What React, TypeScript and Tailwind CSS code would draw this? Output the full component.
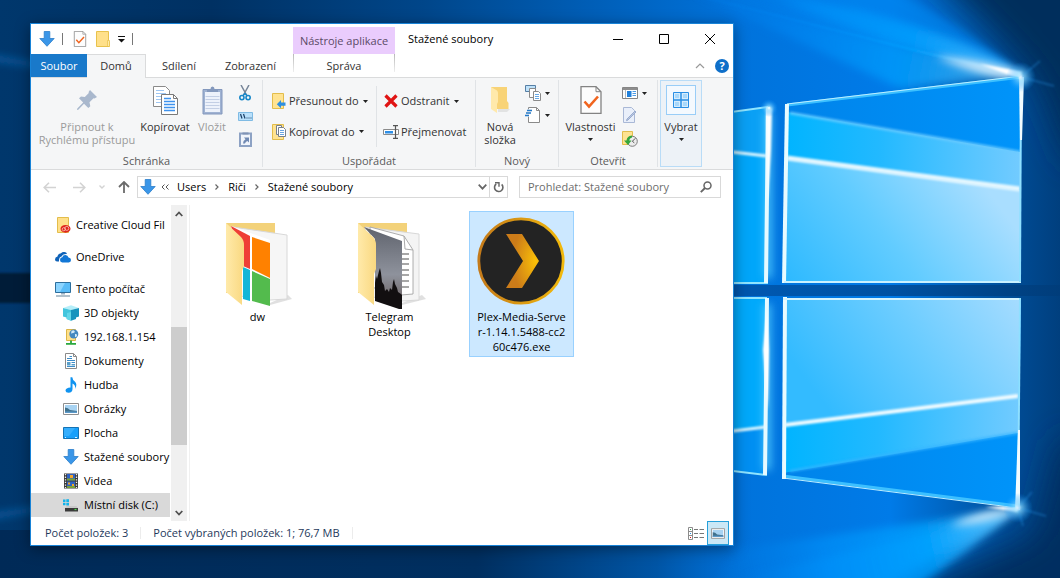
import React, { JSX, ReactNode } from 'react';
import clsx from 'clsx';

interface IconProps {
  className?: string;
}

interface TreeItem {
  label: string;
  icon: JSX.Element;
  root?: boolean;
  selected?: boolean;
}

interface FileItem {
  lines: string[];
  icon: JSX.Element;
  selected?: boolean;
}

const Wallpaper = (): JSX.Element => (
  <svg
    className="absolute inset-0 h-full w-full"
    viewBox="0 0 1060 578"
    preserveAspectRatio="xMidYMid slice"
    aria-hidden="true"
  >
    <defs>
      <linearGradient id="sky" x1="0" x2="1">
        <stop offset="0" stopColor="#00376c" />
        <stop offset="0.2" stopColor="#003163" />
        <stop offset="0.4" stopColor="#00468a" />
        <stop offset="0.55" stopColor="#005db5" />
        <stop offset="0.7" stopColor="#0073dc" />
        <stop offset="0.84" stopColor="#007be8" />
        <stop offset="0.95" stopColor="#004e99" />
        <stop offset="1" stopColor="#003f7e" />
      </linearGradient>
      <linearGradient id="floor" x1="0" x2="1">
        <stop offset="0" stopColor="#002a57" />
        <stop offset="0.45" stopColor="#002f60" />
        <stop offset="0.62" stopColor="#00498f" stopOpacity="0.6" />
        <stop offset="0.72" stopColor="#0068cc" stopOpacity="0" />
      </linearGradient>
      <linearGradient id="beamTop" gradientUnits="userSpaceOnUse" x1="640" y1="0" x2="1020" y2="75">
        <stop offset="0" stopColor="#0078e2" stopOpacity="0" />
        <stop offset="0.4" stopColor="#0088f4" stopOpacity="0.8" />
        <stop offset="0.7" stopColor="#00a2ff" />
        <stop offset="1" stopColor="#6fcbff" />
      </linearGradient>
      <linearGradient id="beamBottom" gradientUnits="userSpaceOnUse" x1="700" y1="578" x2="1018" y2="508">
        <stop offset="0" stopColor="#0078e2" stopOpacity="0" />
        <stop offset="0.4" stopColor="#0092fa" stopOpacity="0.8" />
        <stop offset="0.7" stopColor="#00a2ff" />
        <stop offset="1" stopColor="#6fcbff" />
      </linearGradient>
      <linearGradient id="paneTop" x1="0" y1="1" x2="1" y2="0.6">
        <stop offset="0" stopColor="#2cb9ff" />
        <stop offset="0.5" stopColor="#62ccff" />
        <stop offset="1" stopColor="#a9deff" />
      </linearGradient>
      <linearGradient id="paneBottom" x1="0" y1="0.4" x2="1" y2="0">
        <stop offset="0" stopColor="#33bbff" />
        <stop offset="0.5" stopColor="#6accff" />
        <stop offset="1" stopColor="#a6dcff" />
      </linearGradient>
      <linearGradient id="band" x1="0" x2="1">
        <stop offset="0" stopColor="#00b4ff" />
        <stop offset="0.4" stopColor="#22b9ff" />
        <stop offset="1" stopColor="#72cbff" />
      </linearGradient>
      <linearGradient id="deep" x1="0" x2="1">
        <stop offset="0" stopColor="#0083ea" />
        <stop offset="1" stopColor="#0094fa" />
      </linearGradient>
      <linearGradient id="sill" x1="0" x2="1">
        <stop offset="0" stopColor="#0050a2" />
        <stop offset="1" stopColor="#003c79" />
      </linearGradient>
      <radialGradient id="flare">
        <stop offset="0" stopColor="#ffffff" />
        <stop offset="0.25" stopColor="#8fdcff" stopOpacity="0.7" />
        <stop offset="1" stopColor="#0091ff" stopOpacity="0" />
      </radialGradient>
      <filter id="blur1" filterUnits="userSpaceOnUse" x="-100" y="-100" width="1300" height="800">
        <feGaussianBlur stdDeviation="1" />
      </filter>
      <filter id="blur4" filterUnits="userSpaceOnUse" x="-100" y="-100" width="1300" height="800">
        <feGaussianBlur stdDeviation="4" />
      </filter>
      <filter id="blur14" filterUnits="userSpaceOnUse" x="-100" y="-100" width="1300" height="800">
        <feGaussianBlur stdDeviation="16" />
      </filter>
    </defs>
    <rect width="1060" height="578" fill="url(#sky)" />
    <rect y="530" width="1060" height="48" fill="url(#floor)" />
    <path d="M-20 273H60v30H-20z" fill="#001a38" filter="url(#blur1)" />
    <path d="M-20 54L50 66v2L-20 58z" fill="#1673c4" filter="url(#blur4)" />
    <path d="M-20 520L50 508v-2L-20 516z" fill="#1673c4" filter="url(#blur4)" />
    {/* dark corners on the right */}
    <path d="M925-60H1130V160H1070L1040 84Q1000 30 925-30z" fill="#002d5b" filter="url(#blur14)" />
    <path d="M1130 640H880L930 578L1035 535L1060 440H1130z" fill="#002f60" filter="url(#blur14)" />
    {/* light beams that leave both outer corners */}
    <path d="M700-30H850Q960 20 1022 75L930 54z" fill="#0086f0" opacity="0.7" filter="url(#blur4)" />
    <path d="M780 0L860 10Q960 34 1022 75L930 54z" fill="#0096fb" opacity="0.6" filter="url(#blur4)" />
    <path d="M640-12L760-6Q960 28 1022 75L930 54L700-6z" fill="url(#beamTop)" opacity="0.6" filter="url(#blur4)" />
    <path d="M690-8L930 54L1020 75L900 88Z" fill="url(#beamTop)" opacity="0.7" filter="url(#blur4)" />
    <path d="M675-10L930 54L1020 74" stroke="url(#beamTop)" strokeWidth="2" fill="none" opacity="0.8" filter="url(#blur1)" />
    <path d="M935 56Q990 62 1022 73L1008 78Q965 70 935 56z" fill="#e6f6ff" filter="url(#blur4)" />
    <path d="M980 64L1022 72L1020 79z" fill="#fff" filter="url(#blur1)" />
    <path d="M700 600L740 548L1018 509Q960 560 880 610z" fill="url(#beamBottom)" opacity="0.8" filter="url(#blur4)" />
    <path d="M740 578L950 528L1018 511L880 588z" fill="url(#beamBottom)" opacity="0.8" filter="url(#blur4)" />
    <path d="M950 526Q980 510 1018 509Q990 522 950 526z" fill="#e6f6ff" filter="url(#blur4)" />
    <path d="M985 507L1020 506L1018 512z" fill="#fff" filter="url(#blur1)" />

    {/* left panes, mostly behind the window */}
    <path d="M600 130L768 107V283H600z" fill="#00a6fa" />
    <path d="M600 130L768 107V156L600 137z" fill="#0aa0f5" />
    <path d="M600 298H767V475L600 455z" fill="#00a9fb" />
    <path d="M600 447L767 427V475L600 455z" fill="#008ff2" />
    <path d="M768 112V278M767 304V470" stroke="#4fcaff" strokeWidth="7" filter="url(#blur4)" />
    <path d="M600 130L768 107M600 283H768M600 298H767M600 455L767 475" stroke="#8fe4ff" strokeWidth="2" fill="none" />
    <path d="M600 137L767 156M600 447L766 427" stroke="#dff7ff" strokeWidth="3" fill="none" filter="url(#blur1)" />
    <path d="M768 107L766 283M767 298L765 475" stroke="#e6faff" strokeWidth="4" fill="none" />
    <path d="M766 108L772 108L771 150L768 200zM767 310L769 350L768 410L763 350z" fill="#fff" filter="url(#blur1)" />

    {/* upper right pane */}
    <path d="M787 105L1022 77L1020 282L784 282z" fill="url(#deep)" />
    <path d="M787 112L1020 152V282H785z" fill="url(#band)" />
    <path d="M787 159L1020 190V282H784z" fill="url(#paneTop)" />
    <path d="M790 113L1020 152" stroke="#6bcbff" strokeWidth="3" opacity="0.8" filter="url(#blur1)" />
    <path d="M787 158L1020 189" stroke="#e4f7ff" strokeWidth="5" filter="url(#blur1)" />
    <path d="M787 105L1022 77" stroke="#3cc0ff" strokeWidth="3" />
    <path d="M787 104L1022 76" stroke="#bdeeff" strokeWidth="1" />
    <path d="M787 104L784 283" stroke="#e8fbff" strokeWidth="4" />
    <path d="M784 282H1021" stroke="#c9f1ff" strokeWidth="2" />
    <path d="M1021 77L1020 282" stroke="#8fe0ff" strokeWidth="2" />
    <path d="M1019 77H1024L1022 140H1020z" fill="#f2fcff" />

    <path d="M770 285H1060V296H770z" fill="url(#sill)" opacity="0.8" />
    <path d="M734 285H770V296H734z" fill="#0050a2" opacity="0.8" />

    {/* lower right pane */}
    <path d="M784 298H1021L1018 508L783 478z" fill="url(#deep)" />
    <path d="M784 298H1020L1018 433L783 473z" fill="url(#band)" />
    <path d="M784 298H1020L1018 396L783 425z" fill="url(#paneBottom)" />
    <path d="M790 471L1018 433" stroke="#35b4ff" strokeWidth="3" opacity="0.7" filter="url(#blur1)" />
    <path d="M785 425L1018 396" stroke="#f0fbff" strokeWidth="4" filter="url(#blur1)" />
    <path d="M783 476L1018 506" stroke="#3cc0ff" strokeWidth="3" />
    <path d="M783 478L1018 508" stroke="#bdeeff" strokeWidth="1" />
    <path d="M785 297L784 479" stroke="#e8fbff" strokeWidth="4" />
    <path d="M783 299H1021" stroke="#d4f4ff" strokeWidth="2" />
    <path d="M1020 298L1018 508" stroke="#8fe0ff" strokeWidth="2" />
    <path d="M1018 430L1020 430L1020 510H1015z" fill="#f2fcff" />

    <circle cx="1021" cy="77" r="15" fill="url(#flare)" />
    <circle cx="1018" cy="508" r="15" fill="url(#flare)" />
    <circle cx="769" cy="108" r="9" fill="url(#flare)" />
    <path
      d="M1021 77L1040 61M1021 77L1054 86M1018 508L1032 492M1018 508L1046 516M1018 508L1023 526"
      stroke="#2c9cf0"
      strokeWidth="2"
      opacity="0.3"
      filter="url(#blur1)"
    />
  </svg>
);

const DownArrow = ({ className }: IconProps): JSX.Element => (
  <svg className={className} viewBox="0 0 16 16" aria-hidden="true">
    <path d="M5.2.5h5.6v7h4.4L8 15.3.8 7.500h4.400z" fill="#3a96e8" stroke="#2a7dca" strokeWidth="0.8" />
  </svg>
);

const SmallFolder = ({ className }: IconProps): JSX.Element => (
  <svg className={className} viewBox="0 0 16 16" aria-hidden="true">
    <path d="M1.500.5h12v9.500l1 1v4.500h-13z" fill="#ffe08a" stroke="#e8c24c" />
    <path d="M12.500 15V9.500h2V15" fill="#ffeaa8" stroke="#e8c24c" strokeWidth="0.7" />
  </svg>
);

const CheckedPage = ({ className }: IconProps): JSX.Element => (
  <svg className={className} viewBox="0 0 22 28" aria-hidden="true">
    <path d="M1 .7h15l5 5v21.600H1z" fill="#fdfdfd" stroke="#838383" strokeWidth="1.300" />
    <path d="M16 .7v5h5" fill="none" stroke="#838383" />
    <path d="M4.500 15.500l4.500 5L18 10.500" fill="none" stroke="#f0641e" strokeWidth="2.600" />
  </svg>
);

const Caret = (): JSX.Element => (
  <svg className="h-[3px] w-[5px] shrink-0" viewBox="0 0 5 3" aria-hidden="true">
    <path d="M0 0h5L2.500 3z" fill="#222" />
  </svg>
);

const PinIcon = (): JSX.Element => (
  <svg className="h-6 w-6" viewBox="0 0 24 24" aria-hidden="true">
    <path d="M15 2l7 7-2.500 1.500-1-.3-4 4 .8 4-2 1.800-4.300-4.300L3 22l-1-.3.300-1.200L8.200 14.500 4 10.300l2-1.800 3.800.6 4-4-.2-1z" fill="#a9b8cd" />
  </svg>
);

const CopyIcon = (): JSX.Element => (
  <svg className="h-[29px] w-[25px]" viewBox="0 0 25 29" aria-hidden="true">
    <path d="M.5.5h12l4 4v16H.5z" fill="#fff" stroke="#8a8a8a" />
    <path d="M3 4.500h8M3 7.500h10M3 10.500h6M3 13.500h5M3 16.500h5" stroke="#9ec6f2" />
    <path d="M8.500 8.500h12l4 4v16h-16z" fill="#fff" stroke="#7a7a7a" />
    <path d="M20.500 8.500v4h4" fill="none" stroke="#7a7a7a" />
    <path d="M11 12.500h7M11 15.500h11M11 18.500h11M11 21.500h11M11 24.500h11" stroke="#3f93ee" strokeWidth="1.300" />
  </svg>
);

const PasteIcon = (): JSX.Element => (
  <svg className="h-[29px] w-[21px]" viewBox="0 0 21 29" aria-hidden="true">
    <path d="M1 3.500h19v24.500H1z" fill="#9fb2d2" stroke="#8297bd" />
    <path d="M3 6h15v20H3z" fill="#edf2fb" />
    <path d="M3.500 10.500h14M3.500 13.500h14M3.500 16.500h14M3.500 19.500h14M3.500 22.500h14" stroke="#c3cfe5" />
    <path d="M5 6V3h3.500q0-2.500 2-2.500t2 2.500H16v3z" fill="#8499bd" />
  </svg>
);

const ScissorsIcon = (): JSX.Element => (
  <svg className="h-4 w-3" viewBox="0 0 12 16" aria-hidden="true">
    <path d="M2 0l5.500 10M10 0L4.500 10" stroke="#768598" strokeWidth="1.500" />
    <circle cx="2.900" cy="12.600" r="2.100" fill="none" stroke="#1787c9" strokeWidth="1.600" />
    <circle cx="9.100" cy="12.600" r="2.100" fill="none" stroke="#1787c9" strokeWidth="1.600" />
    <path d="M4 10.500l2-2 2 2" fill="none" stroke="#1787c9" strokeWidth="1.500" />
  </svg>
);

const CopyPathIcon = (): JSX.Element => (
  <svg className="h-[9px] w-[15px]" viewBox="0 0 15 9" aria-hidden="true">
    <path d="M.5.5h14v8H.5z" fill="#b9e0fb" stroke="#7fbbe4" />
    <path d="M2.500 2l1.500 4.500M5.500 2L7 6.500M8.500 6h1M10.500 6h1M12.500 6h1" stroke="#1b3f66" strokeWidth="1.200" />
  </svg>
);

const PasteShortcutIcon = (): JSX.Element => (
  <svg className="h-4 w-[13px]" viewBox="0 0 13 16" aria-hidden="true">
    <path d="M1 2.500h11V15H1z" fill="#f0f4fb" stroke="#8da2c4" strokeWidth="2" />
    <path d="M3.500 3.500V1.500h6v2z" fill="#7f93b5" />
    <path d="M4 12.500q0-3 2.500-4.200L5 6.500h5v5L8.300 9.900Q6.500 10.500 6 12.500z" fill="#7089b3" />
  </svg>
);

const MoveToIcon = (): JSX.Element => (
  <svg className="h-4 w-[14px]" viewBox="0 0 14 16" aria-hidden="true">
    <path d="M.5.5h11v15H.5z" fill="#ffe391" stroke="#e3bd4b" />
    <path d="M13.500 9.500H9V7L4.800 11.200 9 15.300v-2.500h4.500z" fill="#2e8fe0" />
  </svg>
);

const CopyToIcon = (): JSX.Element => (
  <svg className="h-4 w-[14px]" viewBox="0 0 14 16" aria-hidden="true">
    <path d="M.5.5h11v15H.5z" fill="#ffe391" stroke="#e3bd4b" />
    <path d="M4.500 1.500h5v9h-5z" fill="#fff" stroke="#77808c" />
    <path d="M6.500 3.500h5l2 2v7h-7z" fill="#fff" stroke="#77808c" />
    <path d="M8 6.500h4M8 8.500h4M8 10.500h4" stroke="#6aa5e0" />
  </svg>
);

const DeleteIcon = (): JSX.Element => (
  <svg className="h-[14px] w-[14px]" viewBox="0 0 14 14" aria-hidden="true">
    <path d="M1.500 1.500l11 11M12.500 1.500l-11 11" stroke="#e01414" strokeWidth="3.200" />
  </svg>
);

const RenameIcon = (): JSX.Element => (
  <svg className="h-[14px] w-4" viewBox="0 0 16 14" aria-hidden="true">
    <path d="M.5 4.500h15v5H.5z" fill="#fff" stroke="#8b8b8b" />
    <path d="M2 6h8v2.500H2z" fill="#2f8fe6" />
    <path d="M10 .7h2l.5.500.5-.5h2M12.500 1v12M10 13.300h2l.5-.5.500.5h2" fill="none" stroke="#555" strokeWidth="1.200" />
  </svg>
);

const NewFolderIcon = (): JSX.Element => (
  <svg className="h-7 w-[22px]" viewBox="0 0 22 28" aria-hidden="true">
    <path d="M9 23h12l-3 3H9z" fill="#cfcfcf" opacity="0.5" />
    <path d="M2 1h16v14l1.500 2v6H2z" fill="#f8d377" />
    <path d="M2 1l6 3.500q1 1 1 2.500v9l-1 2v9L2 23z" fill="#ffe9ab" />
  </svg>
);

const NewItemIcon = (): JSX.Element => (
  <svg className="h-4 w-4" viewBox="0 0 16 16" aria-hidden="true">
    <path d="M.5.500h10v6H.5z" fill="#bfe2fa" stroke="#567fa5" />
    <path d="M4.500 3.500h6v9h-6z" fill="#fff" stroke="#8a8a8a" />
    <path d="M8.500 6.500h5l2 2v7h-7z" fill="#fff" stroke="#8a8a8a" />
    <path d="M10 9.500h4M10 11.500h4M10 13.500h4" stroke="#67a9e6" />
  </svg>
);

const EasyAccessIcon = (): JSX.Element => (
  <svg className="h-4 w-4" viewBox="0 0 16 16" aria-hidden="true">
    <path d="M3.500.5h8l3 3v12h-11z" fill="#fff" stroke="#8a8a8a" />
    <path d="M11.500.5v3h3" fill="none" stroke="#8a8a8a" />
    <path d="M2 3.500h5M1 6h5M0 8.500h4" stroke="#f5f6f7" strokeWidth="2.500" />
    <path d="M2 3.500h5M1 6h5M0 8.500h4" stroke="#2479c8" strokeWidth="1.300" />
  </svg>
);

const OpenIcon = (): JSX.Element => (
  <svg className="h-3 w-4" viewBox="0 0 16 12" aria-hidden="true">
    <path d="M.5.5h15v11H.5z" fill="#fff" stroke="#858585" />
    <path d="M1 1h14v2H1z" fill="#8d8d8d" />
    <path d="M5 4h4.500v6H5z" fill="#2181dc" />
    <path d="M10.500 4.500H14M10.500 6.500H14M10.500 8.500H14" stroke="#4d9be4" />
    <path d="M3.500 3v8" stroke="#bbb" />
  </svg>
);

const EditIcon = (): JSX.Element => (
  <svg className="h-4 w-[14px]" viewBox="0 0 14 16" aria-hidden="true">
    <path d="M.5.5h8l3 3v12H.5z" fill="#e9effa" stroke="#a9b8d6" />
    <path d="M13 5L5 13l-1.500.7.5-1.700 8-8z" fill="#b9c7e0" stroke="#9badd0" />
  </svg>
);

const HistoryIcon = (): JSX.Element => (
  <svg className="h-4 w-4" viewBox="0 0 16 16" aria-hidden="true">
    <path d="M.5.500h10v13H.5z" fill="#ffe391" stroke="#e3bd4b" />
    <circle cx="10.300" cy="10.300" r="5" fill="#ececec" stroke="#7d7d7d" />
    <path d="M10.300 10.300l3-3M10.300 10.300l2 1.500" stroke="#555" />
    <path d="M10 4.500Q5 5 4.500 9.500H2L6 14l3.500-4.500H7.200Q7.500 7 10 6.500z" fill="#35a73c" />
  </svg>
);

const SelectIcon = (): JSX.Element => (
  <svg className="h-4 w-4" viewBox="0 0 16 16" aria-hidden="true">
    <path d="M.5.500h15v15H.5z" fill="#d6edfd" stroke="#2b8fe4" />
    <path d="M8 0v16M0 8h16" stroke="#2b8fe4" strokeWidth="1.500" />
    <path d="M2 2h4v4H2zM10 2h4v4h-4zM2 10h4v4H2zM10 10h4v4h-4z" fill="#a9d8fa" />
  </svg>
);

const CreativeCloudIcon = (): JSX.Element => (
  <svg className="h-4 w-4" viewBox="0 0 16 16" aria-hidden="true">
    <path d="M2.500.5h11v15h-11z" fill="#ffe08a" stroke="#e3bd4b" />
    <ellipse cx="10.500" cy="11.800" rx="5" ry="3.900" fill="#e0251b" />
    <circle cx="8.800" cy="12.200" r="1.600" fill="none" stroke="#ffd7c8" strokeWidth="0.700" />
    <circle cx="11.800" cy="11.400" r="2" fill="none" stroke="#ffd7c8" strokeWidth="0.700" />
  </svg>
);

const OneDriveIcon = (): JSX.Element => (
  <svg className="h-4 w-4" viewBox="0 0 16 16" aria-hidden="true">
    <path d="M0 10.500Q0 7.800 2.500 7.500 3 4.500 6 4.200 7.500 2.500 9.500 3 11.500 3.200 12 5 8 4.500 6.500 7.500 3.800 8 4 12.500H2Q0 12.500 0 10.500z" fill="#0f62b8" />
    <path d="M5 11Q5 8.500 7.300 8.200 8 5.800 10.500 6q2.300.2 3 2.500Q16 8.800 16 11t-2.200 2.500H7.300Q5 13.300 5 11z" fill="#1277d6" />
  </svg>
);

const ComputerIcon = (): JSX.Element => (
  <svg className="h-4 w-4" viewBox="0 0 16 16" aria-hidden="true">
    <path d="M.5 1.500h15v10H.5z" fill="#59bcf8" stroke="#2d6e9c" />
    <path d="M1 2h9L5 11H1z" fill="#8bd4ff" />
    <path d="M6 12h4v1.500H6z" fill="#9ab0c2" />
    <path d="M1 15h14" stroke="#7d97aa" strokeWidth="1.200" />
  </svg>
);

const CubeIcon = (): JSX.Element => (
  <svg className="h-4 w-4" viewBox="0 0 16 16" aria-hidden="true">
    <path d="M0 3L8 .3l8 2.700-8 2z" fill="#b5eef9" />
    <path d="M0 3l8 2v10.800L3.500 14V12.500L0 11.500z" fill="#42c5dd" />
    <path d="M16 3l-8 2v10.800l5-1.800v-1.500l3-1z" fill="#1693bd" />
    <path d="M4 8l4-1v8.800L4 14z" fill="#62d6e8" />
  </svg>
);

const NetworkIcon = (): JSX.Element => (
  <svg className="h-4 w-4" viewBox="0 0 16 16" aria-hidden="true">
    <path d="M3.500.5h9v11h-9z" fill="#ffe08a" stroke="#dcb545" />
    <circle cx="10.800" cy="5" r="4.500" fill="#4589c0" />
    <path d="M8.500 2q2-1.500 3 0t-1.500 2-2 1zM12 5q2.500-.5 2 1.500T12 8z" fill="#d2e9f7" />
    <path d="M8 11.500V14M3 14.800h10" stroke="#2aa83d" strokeWidth="1.800" />
  </svg>
);

const DocumentIcon = (): JSX.Element => (
  <svg className="h-4 w-4" viewBox="0 0 16 16" aria-hidden="true">
    <path d="M2.500.5h8l3 3v12h-11z" fill="#fff" stroke="#8a8a8a" />
    <path d="M10.500.5v3h3" fill="none" stroke="#8a8a8a" />
    <path d="M6.500 3.500H9M4 5.500h5M4 7.500h8M4 13.500h8M8.500 9.500H12" stroke="#3c8cc9" />
    <path d="M4 9h3.500v3.500H4zM8.500 11h3.500v1.500H8.500z" fill="#5a9fc9" />
  </svg>
);

const MusicIcon = (): JSX.Element => (
  <svg className="h-4 w-4" viewBox="0 0 16 16" aria-hidden="true">
    <path d="M7.500.2h1.800q.2 2.500 2.500 4.300 3 2.800.2 7.500 1-4-2.500-5.500v5.500q0 3.500-4 3.800-2.800 0-3-2 .2-3 5-3.200z" fill="#1093f0" />
  </svg>
);

const PictureIcon = ({ className }: IconProps): JSX.Element => (
  <svg className={className} viewBox="0 0 16 12" aria-hidden="true">
    <path d="M.5.500h15v11H.5z" fill="#fff" stroke="#8f8f8f" />
    <path d="M2 2h12v8H2z" fill="#a8d3f2" />
    <path d="M2 4.500q3 0 5 2.500l7 1v2H2z" fill="#40718c" />
    <path d="M2 8.500h12V10H2z" fill="#5b99c9" />
  </svg>
);

const DesktopIcon = (): JSX.Element => (
  <svg className="h-4 w-4" viewBox="0 0 16 16" aria-hidden="true">
    <path d="M.5 2.500h15v11H.5z" fill="#18a0fb" stroke="#1473b5" />
    <path d="M1 3h11L6 11H1z" fill="#35aefd" />
    <path d="M2 12.500h1M12 12.500h2" stroke="#d9f0ff" />
  </svg>
);

const VideoIcon = (): JSX.Element => (
  <svg className="h-4 w-4" viewBox="0 0 16 16" aria-hidden="true">
    <path d="M1 .5h14v15H1z" fill="#3a3a3a" />
    <path d="M2.500 1v14M13.500 1v14" stroke="#eee" strokeWidth="1.300" strokeDasharray="1.300 1.300" />
    <path d="M4 1h8v6.500H4zM4 8.500h8V15H4z" fill="#2e62c4" />
    <path d="M4 5.500h8v2H4zM4 13h8v2H4z" fill="#78a03a" />
    <path d="M7 2h3v3H7zM5 9.500h2v2H5zM9 11h2v2H9z" fill="#f2a52c" />
  </svg>
);

const DiskIcon = (): JSX.Element => (
  <svg className="h-4 w-4" viewBox="0 0 16 16" aria-hidden="true">
    <path d="M0 2.500h2.500V5H0zM3.300 2.200H6V5H3.300zM0 5.800h2.500v2.500H0zM3.300 5.800H6v2.800H3.300z" fill="#12b3ea" />
    <path d="M3.500 9h10l1.500 2H2z" fill="#c9c9c9" />
    <path d="M2 11h13v3.500H2z" fill="#3a3a3a" />
    <path d="M11.500 12.500h2" stroke="#4be04b" strokeWidth="1.200" />
  </svg>
);

const LogoFolderArt = (): JSX.Element => (
  <svg className="mt-px h-24 w-24" viewBox="0 0 96 96" aria-hidden="true">
    <defs>
      <linearGradient id="flap" x1="0" x2="1">
        <stop offset="0" stopColor="#ffeaaa" />
        <stop offset="1" stopColor="#f9d880" />
      </linearGradient>
    </defs>
    <path d="M60 92l22-6-4-4-18 8z" fill="#ccc" opacity="0.600" />
    <path d="M16 10h49v70H16z" fill="#f3d27a" />
    <path d="M23 14l54 8v64l-17 1-30-4z" fill="#f6f6f6" stroke="#d8d8d8" />
    <path d="M21 13l39 14v66l-26-6z" fill="#fff" />
    <path d="M21 13l19 10v33l-7-3z" fill="#ef3e36" />
    <path d="M42 24l18 6v35l-18-9z" fill="#ff8100" />
    <path d="M33 54l7 3v31l-7-2z" fill="#12b6d8" />
    <path d="M42 58l18 8v27l-18-5z" fill="#53bb4d" />
    <path d="M16 10l15 14q3 3 3 8v21l-2 5v34L16 79z" fill="url(#flap)" />
  </svg>
);

const PhotoFolderArt = (): JSX.Element => (
  <svg className="mt-px h-24 w-24" viewBox="0 0 96 96" aria-hidden="true">
    <defs>
      <linearGradient id="dusk" x1="0" y1="0" x2="0" y2="1">
        <stop offset="0" stopColor="#5f636d" />
        <stop offset="0.6" stopColor="#8e929c" />
        <stop offset="1" stopColor="#6b5f5e" />
      </linearGradient>
    </defs>
    <path d="M60 92l24-6-4-4-20 8z" fill="#ccc" opacity="0.600" />
    <path d="M16 10h49v70H16z" fill="#f3d27a" />
    <path d="M23 14l54 7v66l-17 1-30-4z" fill="#f4f4f4" stroke="#d8d8d8" />
    <path d="M28 14l34 9 9 14v44l-12 1-30-8z" fill="#fff" stroke="#999" strokeWidth="0.800" />
    <path d="M62 23l1 13 8 1" fill="none" stroke="#aaa" />
    <path d="M58 41h9M58 46h9M58 51h9M58 57h9M58 62h9M58 68h9M58 74h9" stroke="#8b8b8b" strokeWidth="1.500" />
    <path d="M22 14l38 14v65l-27-9V26z" fill="url(#dusk)" />
    <path
      d="M33 70l1-7 1 3 2-8 1-3 1 5 1 9 2 3 1 6 2-2 2 3 1-4 2 2 1-8 1-3 1 5 2 4 1 4 3 2 1 1v15l-27-9z"
      fill="#120f10"
    />
    <path d="M16 10l15 14q3 3 3 8v24l-2 5v31L16 79z" fill="url(#flap)" />
  </svg>
);

const PlexArt = (): JSX.Element => (
  <svg className="mt-px h-24 w-24" viewBox="0 0 96 96" aria-hidden="true">
    <defs>
      <linearGradient id="plexRing" x1="0" x2="1">
        <stop offset="0" stopColor="#c47a1a" />
        <stop offset="1" stopColor="#f2b90c" />
      </linearGradient>
      <radialGradient id="plexArrow" cx="0.900" cy="0.500" r="0.700">
        <stop offset="0" stopColor="#fbc107" />
        <stop offset="1" stopColor="#cc7c19" />
      </radialGradient>
    </defs>
    <circle cx="47" cy="48" r="42.200" fill="#232323" stroke="url(#plexRing)" strokeWidth="2.800" />
    <path d="M32 21h16l17 27-17 27H32l17-27z" fill="url(#plexArrow)" />
  </svg>
);

interface RibbonGroupProps {
  label: string;
  className?: string;
  children: ReactNode;
}

const RibbonGroup = ({ label, className, children }: RibbonGroupProps): JSX.Element => (
  <section
    aria-label={label}
    className={clsx('flex shrink-0 flex-col border-r border-[#e0e3e6] text-[#5a5a5a]', className)}
  >
    <div className="flex h-[73px] shrink-0 text-[#333]">{children}</div>
    <div className="text-center leading-4">{label}</div>
  </section>
);

interface LargeButtonProps {
  icon: JSX.Element;
  label: string;
  className?: string;
  disabled?: boolean;
  menu?: boolean;
}

const LargeButton = ({ icon, label, className, disabled, menu }: LargeButtonProps): JSX.Element => (
  <button
    type="button"
    disabled={disabled}
    className={clsx(
      'flex shrink-0 flex-col items-center whitespace-pre-line pt-1 leading-[13px] disabled:text-[#9a9a9a]',
      className,
    )}
  >
    <span className="mb-1 flex h-8 items-center">{icon}</span>
    {label}
    {menu && (
      <span className="flex h-3 items-center">
        <Caret />
      </span>
    )}
  </button>
);

interface SmallButtonProps {
  icon: JSX.Element;
  label?: string;
  name?: string;
  menu?: boolean;
}

const SmallButton = ({ icon, label, name, menu }: SmallButtonProps): JSX.Element => (
  <button type="button" aria-label={name} className="flex items-center whitespace-nowrap">
    <span className="flex w-4 shrink-0 justify-center">{icon}</span>
    {label && <span className="ml-[2px]">{label}</span>}
    {menu && (
      <span className="ml-1">
        <Caret />
      </span>
    )}
  </button>
);

const treeItems: TreeItem[] = [
  { label: 'Creative Cloud Fil', icon: <CreativeCloudIcon />, root: true },
  { label: 'OneDrive', icon: <OneDriveIcon />, root: true },
  { label: 'Tento počítač', icon: <ComputerIcon />, root: true },
  { label: '3D objekty', icon: <CubeIcon /> },
  { label: '192.168.1.154', icon: <NetworkIcon /> },
  { label: 'Dokumenty', icon: <DocumentIcon /> },
  { label: 'Hudba', icon: <MusicIcon /> },
  { label: 'Obrázky', icon: <PictureIcon className="h-3 w-4" /> },
  { label: 'Plocha', icon: <DesktopIcon /> },
  { label: 'Stažené soubory', icon: <DownArrow className="h-4 w-4" /> },
  { label: 'Videa', icon: <VideoIcon /> },
  { label: 'Místní disk (C:)', icon: <DiskIcon />, selected: true },
];

const files: FileItem[] = [
  { lines: ['dw'], icon: <LogoFolderArt /> },
  { lines: ['Telegram', 'Desktop'], icon: <PhotoFolderArt /> },
  { lines: ['Plex-Media-Serve', 'r-1.14.1.5488-cc2', '60c476.exe'], icon: <PlexArt />, selected: true },
];

const TitleBar = (): JSX.Element => (
  <header className="flex h-[30px]">
    <div className="flex w-[262px] shrink-0 items-center gap-[7px] pl-2">
      <DownArrow className="h-4 w-4" />
      <span className="h-3 w-px bg-[#777]" />
      <button type="button" aria-label="Vlastnosti" className="ml-[2px]">
        <CheckedPage className="h-4 w-4" />
      </button>
      <button type="button" aria-label="Nová složka">
        <SmallFolder className="h-4 w-4" />
      </button>
      <button type="button" aria-label="Přizpůsobit panel">
        <svg className="h-[7px] w-[7px]" viewBox="0 0 7 7" aria-hidden="true">
          <path d="M0 .5h7" stroke="#111" />
          <path d="M0 3h7L3.500 6.500z" fill="#111" />
        </svg>
      </button>
      <span className="h-3 w-px bg-[#777]" />
    </div>
    <div className="mt-[3px] w-[102px] shrink-0 bg-[#eaccfd] text-center leading-7 text-[#5a4a66]">
      Nástroje aplikace
    </div>
    <h1 className="ml-[13px] flex-1 leading-[30px] text-black">Stažené soubory</h1>
    <div className="flex">
      {[
        { name: 'Minimalizovat', d: 'M0 5.500h10' },
        { name: 'Maximalizovat', d: 'M.5.500h9v9h-9z' },
        { name: 'Zavřít', d: 'M0 0l10 10M10 0L0 10' },
      ].map(({ name, d }) => (
        <button key={name} type="button" aria-label={name} className="flex w-[46px] items-center justify-center">
          <svg className="h-[10px] w-[10px]" viewBox="0 0 10 10" aria-hidden="true">
            <path d={d} fill="none" stroke="#000" />
          </svg>
        </button>
      ))}
    </div>
  </header>
);

const TabRow = (): JSX.Element => (
  <div role="tablist" className="flex h-[23px] shrink-0 leading-6 text-[#333]">
    <button type="button" role="tab" className="w-14 bg-[#1979ca] text-white">
      Soubor
    </button>
    <button
      type="button"
      role="tab"
      aria-selected="true"
      className="relative z-10 -mb-px flex w-[59px] justify-center border-t border-r border-[#dadbdc] bg-[#f5f6f7] leading-[22px]"
    >
      Domů
    </button>
    <button type="button" role="tab" className="w-[66px]">
      Sdílení
    </button>
    <button type="button" role="tab" className="w-[77px]">
      Zobrazení
    </button>
    <div className="ml-1 flex w-[102px] justify-between">
      <span className="h-[18px] w-px bg-linear-to-b from-[#b9b9b9] to-[#eeeeee]" />
      <button type="button" role="tab" className="flex-1">
        Správa
      </button>
      <span className="h-[18px] w-px bg-linear-to-b from-[#b9b9b9] to-[#eeeeee]" />
    </div>
    <div className="flex flex-1 items-center justify-end gap-[10px] pr-1">
      <button type="button" aria-label="Sbalit pás karet">
        <svg className="h-[6px] w-[10px]" viewBox="0 0 10 6" aria-hidden="true">
          <path d="M1 5l4-4 4 4" fill="none" stroke="#999" strokeWidth="1.200" />
        </svg>
      </button>
      <button
        type="button"
        aria-label="Nápověda"
        className="h-[14px] w-[14px] rounded-full bg-[#0f6fc9] text-center font-bold leading-[14px] text-white"
      >
        ?
      </button>
    </div>
  </div>
);

const Ribbon = (): JSX.Element => (
  <div className="flex h-[93px] shrink-0 overflow-hidden border-y border-[#dadbdc] bg-[#f5f6f7] py-[2px]">
    <RibbonGroup label="Schránka" className="w-[232px]">
      <LargeButton icon={<PinIcon />} label={'Připnout k\nRychlému přístupu'} className="w-28" disabled />
      <LargeButton icon={<CopyIcon />} label="Kopírovat" className="w-11 whitespace-nowrap" />
      <LargeButton icon={<PasteIcon />} label="Vložit" className="w-[50px]" disabled />
      <div className="flex w-4 flex-col items-center justify-between pt-[5px] pb-[6px]">
        <button type="button" aria-label="Vyjmout">
          <ScissorsIcon />
        </button>
        <button type="button" aria-label="Kopírovat cestu">
          <CopyPathIcon />
        </button>
        <button type="button" aria-label="Vložit zástupce">
          <PasteShortcutIcon />
        </button>
      </div>
    </RibbonGroup>
    <RibbonGroup label="Uspořádat" className="w-[213px]">
      <div className="my-[6px] flex w-[114px] flex-col justify-around border-r border-[#e0e3e6] pl-2">
        <SmallButton icon={<MoveToIcon />} label="Přesunout do" menu />
        <SmallButton icon={<CopyToIcon />} label="Kopírovat do" menu />
      </div>
      <div className="my-[6px] flex flex-col justify-around pl-[6px]">
        <SmallButton icon={<DeleteIcon />} label="Odstranit" menu />
        <SmallButton icon={<RenameIcon />} label="Přejmenovat" />
      </div>
    </RibbonGroup>
    <RibbonGroup label="Nový" className="w-[83px]">
      <LargeButton icon={<NewFolderIcon />} label={'Nová\nsložka'} className="w-12" />
      <div className="flex flex-col gap-[6px] pt-[5px] pl-px">
        <SmallButton icon={<NewItemIcon />} name="Nová položka" menu />
        <SmallButton icon={<EasyAccessIcon />} name="Snadný přístup" menu />
      </div>
    </RibbonGroup>
    <RibbonGroup label="Otevřít" className="w-[99px]">
      <LargeButton
        icon={<CheckedPage className="h-7 w-[22px]" />}
        label="Vlastnosti"
        className="w-[63px]"
        menu
      />
      <div className="flex flex-col justify-between pt-[7px] pb-[6px]">
        <SmallButton icon={<OpenIcon />} name="Otevřít" menu />
        <SmallButton icon={<EditIcon />} name="Upravit" />
        <SmallButton icon={<HistoryIcon />} name="Historie" />
      </div>
    </RibbonGroup>
    <button
      type="button"
      className="ml-[2px] flex w-[42px] flex-col items-center border border-[#b9dcf7] bg-[#edf2f7] leading-[13px] text-[#333]"
    >
      <span className="mt-1 mb-[5px] flex h-[30px] w-[30px] items-center justify-center border border-[#99cdf7] bg-[#f4f9fe]">
        <SelectIcon />
      </span>
      Vybrat
      <span className="flex h-3 items-center">
        <Caret />
      </span>
    </button>
  </div>
);

const AddressBar = (): JSX.Element => (
  <div className="flex h-[35px] shrink-0 items-start pt-[6px] pr-3 pl-3">
    <div className="flex h-[22px] w-[94px] shrink-0 items-center justify-between pr-[7px]">
      <button type="button" aria-label="Zpět">
        <svg className="h-[11px] w-[13px]" viewBox="0 0 13 11" aria-hidden="true">
          <path d="M6 .7L1.200 5.500 6 10.300M1.200 5.500H13" fill="none" stroke="#d3d3d3" strokeWidth="1.600" />
        </svg>
      </button>
      <button type="button" aria-label="Vpřed" className="ml-1">
        <svg className="h-[11px] w-[13px]" viewBox="0 0 13 11" aria-hidden="true">
          <path d="M7 .7l4.800 4.800L7 10.300M11.800 5.500H0" fill="none" stroke="#d3d3d3" strokeWidth="1.600" />
        </svg>
      </button>
      <button type="button" aria-label="Poslední umístění">
        <svg className="h-1 w-[6px]" viewBox="0 0 6 4" aria-hidden="true">
          <path d="M.5.500L3 3 5.500.5" fill="none" stroke="#d3d3d3" strokeWidth="1.400" />
        </svg>
      </button>
      <button type="button" aria-label="Nahoru">
        <svg className="h-3 w-3" viewBox="0 0 12 12" aria-hidden="true">
          <path d="M1 6l5-5 5 5M6 1v11" fill="none" stroke="#6b6b6b" strokeWidth="1.800" />
        </svg>
      </button>
    </div>
    <div className="flex h-[22px] min-w-0 flex-1 items-center border border-[#d9d9d9] text-black">
      <DownArrow className="ml-[2px] h-4 w-4" />
      <svg className="ml-[5px] h-[6px] w-2" viewBox="0 0 8 6" aria-hidden="true">
        <path d="M3.500.500L1 3l2.500 2.500M7.500.500L5 3l2.500 2.500" fill="none" stroke="#555" />
      </svg>
      <nav aria-label="Cesta" className="ml-2 flex items-center gap-[9px]">
        {['Users', 'Riči', 'Stažené soubory'].map((part, index) => (
          <React.Fragment key={part}>
            {index > 0 && (
              <svg className="h-[6px] w-1" viewBox="0 0 4 6" aria-hidden="true">
                <path d="M.5.500L3 3 .5 5.500" fill="none" stroke="#666" strokeWidth="1.200" />
              </svg>
            )}
            <button type="button">{part}</button>
          </React.Fragment>
        ))}
      </nav>
      <button type="button" aria-label="Předchozí umístění" className="ml-auto px-[2px]">
        <svg className="h-[6px] w-[9px]" viewBox="0 0 9 6" aria-hidden="true">
          <path d="M.7.700l3.800 4 3.800-4" fill="none" stroke="#666" strokeWidth="1.700" />
        </svg>
      </button>
      <button
        type="button"
        aria-label="Aktualizovat"
        className="flex h-full w-[18px] items-center justify-center border-l border-[#d9d9d9]"
      >
        <svg className="h-3 w-3" viewBox="0 0 12 12" aria-hidden="true">
          <path d="M3.200 3a4.200 4.200 0 1 0 5.500.4" fill="none" stroke="#666" strokeWidth="1.600" />
          <path d="M2 1.700h4v4" fill="none" stroke="#666" strokeWidth="1.400" />
        </svg>
      </button>
    </div>
    <label className="ml-[11px] flex h-[22px] w-[202px] shrink-0 items-center border border-[#d9d9d9] pr-2 pl-2">
      <input
        type="search"
        aria-label="Prohledat: Stažené soubory"
        placeholder="Prohledat: Stažené soubory"
        className="min-w-0 flex-1 bg-transparent outline-none placeholder:text-[#6d6d6d]"
      />
      <svg className="h-3 w-3" viewBox="0 0 12 12" aria-hidden="true">
        <circle cx="7.500" cy="4.500" r="3.500" fill="none" stroke="#666" strokeWidth="1.500" />
        <path d="M5 7L.8 11.200" stroke="#666" strokeWidth="1.900" />
      </svg>
    </label>
  </div>
);

const Sidebar = (): JSX.Element => (
  <aside className="flex w-[159px] shrink-0 border-r border-[#f0f0f0]">
    <nav aria-label="Navigace" className="w-[139px] overflow-hidden pt-2 text-black">
      {treeItems.map(({ label, icon, root, selected }) => (
        <a
          key={label}
          href="#"
          className={clsx(
            'flex h-6 items-center gap-[5px] whitespace-nowrap',
            root ? 'pl-6' : 'pl-8',
            root && label !== 'Tento počítač' && 'mb-2',
            selected && 'bg-[#d9d9d9]',
          )}
        >
          <span className="flex w-4 shrink-0 items-center">{icon}</span>
          {label}
        </a>
      ))}
    </nav>
    <div className="ml-px flex w-4 flex-col items-center bg-[#f0f0f0]">
      <svg className="my-[6px] h-[6px] w-2 shrink-0" viewBox="0 0 8 6" aria-hidden="true">
        <path d="M.7 5L4 1.500 7.300 5" fill="none" stroke="#505050" strokeWidth="1.800" />
      </svg>
      <span className="min-h-0 flex-[104]" />
      <span className="min-h-0 w-full flex-[117] bg-[#cdcdcd]" />
      <span className="min-h-0 flex-[60]" />
      <svg className="my-[5px] h-[6px] w-2 shrink-0" viewBox="0 0 8 6" aria-hidden="true">
        <path d="M.7 1L4 4.500 7.300 1" fill="none" stroke="#505050" strokeWidth="1.800" />
      </svg>
    </div>
  </aside>
);

const StatusBar = (): JSX.Element => (
  <footer className="flex h-6 shrink-0 items-center pr-1 pl-[14px] text-[#1e395b]">
    <span>Počet položek: 3</span>
    <span className="mx-3 h-3 w-px bg-[#ececec]" />
    <span>Počet vybraných položek: 1; 76,7 MB</span>
    <span className="mx-3 h-3 w-px bg-[#ececec]" />
    <div className="ml-auto flex h-full items-center gap-[3px]">
      <button type="button" aria-label="Podrobnosti">
        <svg className="h-[13px] w-4" viewBox="0 0 16 13" aria-hidden="true">
          <path d="M.5.500h4v12h-4zM.5 4.500h4M.5 8.500h4" fill="#fff" stroke="#8c8c8c" />
          <path d="M6 2.500h4M11.500 2.500H16M6 6.500h4M11.500 6.500H16M6 10.500h4M11.500 10.500H16" stroke="#777" />
          <path d="M2 2.500h1" stroke="#2ea04a" />
          <path d="M2 6.500h1" stroke="#2b8fe4" />
          <path d="M2 10.500h1" stroke="#e01414" />
        </svg>
      </button>
      <button
        type="button"
        aria-label="Velké ikony"
        className="flex h-full w-[22px] items-center justify-center border border-[#26a0da] bg-[#cbe8f6]"
      >
        <PictureIcon className="h-[11px] w-[14px]" />
      </button>
    </div>
  </footer>
);

const App = (): JSX.Element => (
  <main className="relative flex h-screen overflow-hidden bg-[#00386f] pt-[23px] pr-[326px] pb-8 pl-[30px] font-['Open_Sans','Noto_Sans',sans-serif] text-[11px] leading-4">
    <Wallpaper />
    <div className="relative flex min-w-0 flex-1 flex-col border border-[#1883d7] bg-white shadow-[0_3px_14px_rgba(0,0,0,0.4)]">
      <TitleBar />
      <TabRow />
      <Ribbon />
      <AddressBar />
      <div className="flex min-h-0 flex-1">
        <Sidebar />
        <ul className="flex flex-1 flex-wrap content-start gap-[27px] pt-[6px] pl-[15px] text-black">
          {files.map(({ lines, icon, selected }) => (
            <li key={lines[0]}>
              <button
                type="button"
                className={clsx(
                  'flex w-[105px] flex-col items-center border pb-[2px] leading-[15px]',
                  selected ? 'border-[#99d1ff] bg-[#cce8ff]' : 'border-transparent',
                )}
              >
                {icon}
                {lines.map((line) => (
                  <span key={line}>{line}</span>
                ))}
              </button>
            </li>
          ))}
        </ul>
      </div>
      <StatusBar />
    </div>
  </main>
);

export default App;
